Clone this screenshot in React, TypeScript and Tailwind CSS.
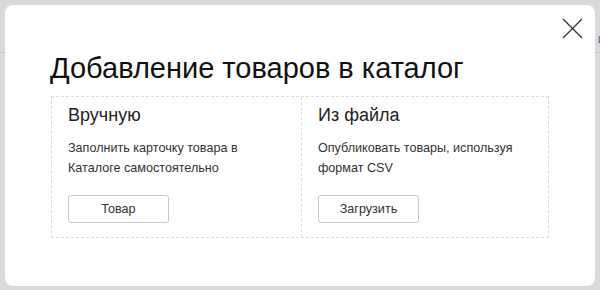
function Option ({ title, text, action, last }: { title: string, text: string[], action: string, last?: boolean }) {
  return (
    <div className={last ? 'flex-1 pl-4 pt-[6px]' : 'w-[250px] pl-4 pt-[6px] border-r border-dashed border-[#dcdcdc]'}>
      <div className='text-[18px] leading-[24px] text-[#222]'>{title}</div>
      <div className='mt-[11px] text-[12.6px] leading-[20px] text-[#333]'>
        {text.map(line => <div key={line}>{line}</div>)}
      </div>
      <button className='mt-[17px] w-[101px] h-[28px] border border-[#c8c8c8] rounded-[3px] bg-white text-[12.6px] text-[#333]'>
        {action}
      </button>
    </div>
  )
}

export default function App () {
  return (
    <div className="relative w-[600px] h-[290px] overflow-hidden bg-[#d9d9d9] font-['Liberation_Sans',Arial,sans-serif]">
      <div className='h-[53px] border-b border-[#c6c6c6] flex items-end justify-end pb-[5px]'>
        <span className='mr-[-5px] text-[13px] leading-[16px] text-[#4a6d9c]'>и</span>
      </div>
      <div className='absolute left-[5px] top-[5px] w-[590px] h-[281px] bg-white rounded-[8px] pl-[45px] pr-[45px] pt-[43px]'>
        <button className='absolute left-[557px] top-[13px] text-[#333]'>
          <svg width='21' height='21' viewBox='0 0 21 21' fill='none' stroke='currentColor' strokeWidth='1.3'>
            <path d='M1 1L20 20M20 1L1 20' />
          </svg>
        </button>
        <h1 className='text-[29px] leading-[40px] text-[#111]'>Добавление товаров в каталог</h1>
        <div className='mt-[8px] ml-[1px] w-[498px] h-[142px] border border-dashed border-[#dcdcdc] flex'>
          <Option title='Вручную' text={['Заполнить карточку товара в', 'Каталоге самостоятельно']} action='Товар' />
          <Option title='Из файла' text={['Опубликовать товары, используя', 'формат CSV']} action='Загрузить' last />
        </div>
      </div>
    </div>
  )
}
